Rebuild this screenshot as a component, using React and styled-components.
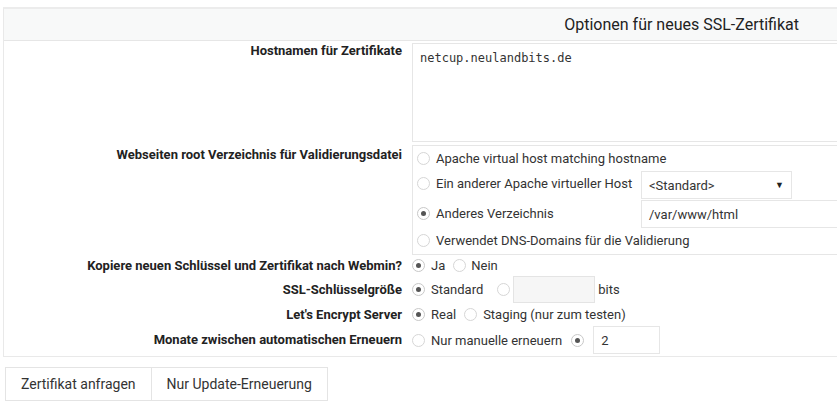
import React from 'react';
import styled, { createGlobalStyle } from 'styled-components';

const GlobalStyle = createGlobalStyle`
  html, body {
    margin: 0;
    padding: 0;
    background: #fff;
    overflow: hidden;
  }
  body {
    font-family: Roboto, "Liberation Sans", sans-serif;
    font-size: 13px;
    color: #333;
  }
`;

const Page = styled.div`
  padding: 7px 0 0 3px;
`;

const Panel = styled.div`
  width: 850px;
  border: 1px solid #e9e9e9;
  border-top: 2px solid #ececec;
  background: #fff;
`;

const PanelHeader = styled.div`
  height: 31px;
  background: #f8f9f9;
  border-bottom: 1px solid #e6e6e6;
  display: flex;
  align-items: center;
  justify-content: flex-end;
  padding-right: 55px;
  font-size: 16px;
  color: #222;
`;

const Form = styled.div`
  display: grid;
  grid-template-columns: 398px 1fr;
  column-gap: 10px;
  padding: 2px 0 2px;
`;

const Label = styled.div`
  text-align: right;
  font-weight: bold;
  color: #222;
  line-height: 16px;
  padding-top: ${(p) => p.$top || 0}px;
  align-self: ${(p) => (p.$top !== undefined ? 'start' : 'center')};
`;

const Value = styled.div`
  display: flex;
  align-items: center;
  min-height: ${(p) => p.$h || 23}px;
  margin-bottom: ${(p) => p.$mb || 0}px;
`;

const TextArea = styled.div`
  width: 100%;
  height: 99px;
  border: 1px solid #e6e6e6;
  padding: 7px 7px;
  box-sizing: border-box;
  font-family: "DejaVu Sans Mono", "Liberation Mono", monospace;
  font-size: 12px;
  color: #333;
`;

const ChoiceBox = styled.div`
  width: 100%;
  border: 1px solid #e6e6e6;
  padding: 0 0 1px 4px;
  display: grid;
  grid-template-columns: 224px 1fr;
  row-gap: 1px;
  align-items: center;
`;

const ChoiceRow = styled.div`
  grid-column: ${(p) => (p.$wide ? '1 / span 2' : 'auto')};
  display: flex;
  align-items: center;
  height: ${(p) => p.$h || 23}px;
  padding-bottom: ${(p) => p.$raise || 0}px;
  box-sizing: border-box;
`;

const Radio = styled.span`
  display: inline-block;
  box-sizing: border-box;
  width: 13px;
  height: 13px;
  border-radius: 50%;
  border: 1px solid ${(p) => (p.$checked ? '#c8c8c8' : '#d6d6d6')};
  background: #fff;
  position: relative;
  margin-right: ${(p) => p.$gap ?? 6}px;
  margin-left: ${(p) => p.$left || 0}px;
  flex-shrink: 0;
  &::after {
    content: '';
    display: ${(p) => (p.$checked ? 'block' : 'none')};
    position: absolute;
    left: 3px;
    top: 3px;
    width: 5px;
    height: 5px;
    border-radius: 50%;
    background: #555;
  }
`;

const Text = styled.span`
  color: #333;
  white-space: nowrap;
`;

const Select = styled.div`
  width: 151px;
  height: 28px;
  box-sizing: border-box;
  border: 1px solid #e6e6e6;
  display: flex;
  align-items: center;
  justify-content: space-between;
  padding: 0 7px 0 7px;
  color: #333;
`;

const Arrow = styled.span`
  font-size: 9px;
  color: #222;
`;

const Input = styled.div`
  box-sizing: border-box;
  width: ${(p) => (p.$w ? `${p.$w}px` : '100%')};
  height: ${(p) => p.$h || 28}px;
  border: 1px solid ${(p) => (p.$disabled ? '#e4e4e4' : '#e6e6e6')};
  background: ${(p) => (p.$disabled ? '#f6f6f6' : '#fff')};
  display: flex;
  align-items: center;
  padding-left: 7px;
  color: #333;
  margin-left: ${(p) => p.$left || 0}px;
  margin-right: ${(p) => p.$right || 0}px;
`;

const Buttons = styled.div`
  display: flex;
  margin: 10px 0 0 2px;
`;

const Button = styled.button`
  height: 34px;
  padding: 0 15px;
  border: 1px solid #e4e4e4;
  background: #fff;
  font-family: Roboto, "Liberation Sans", sans-serif;
  font-size: 14px;
  color: #333;
  & + & {
    border-left: none;
  }
`;

const App = () => (
  <Page>
    <GlobalStyle />
    <Panel>
      <PanelHeader>Optionen für neues SSL-Zertifikat</PanelHeader>
      <Form>
        <Label $top={0}>Hostnamen für Zertifikate</Label>
        <Value $mb={3}>
          <TextArea>netcup.neulandbits.de</TextArea>
        </Value>

        <Label $top={2}>Webseiten root Verzeichnis für Validierungsdatei</Label>
        <Value>
          <ChoiceBox>
            <ChoiceRow $wide $h={24}>
              <Radio />
              <Text>Apache virtual host matching hostname</Text>
            </ChoiceRow>
            <ChoiceRow $h={28} $raise={3}>
              <Radio />
              <Text>Ein anderer Apache virtueller Host</Text>
            </ChoiceRow>
            <Select>
              <span>&lt;Standard&gt;</span>
              <Arrow>▼</Arrow>
            </Select>
            <ChoiceRow $h={28} $raise={2}>
              <Radio $checked />
              <Text>Anderes Verzeichnis</Text>
            </ChoiceRow>
            <Input>/var/www/html</Input>
            <ChoiceRow $wide $h={24} $raise={1}>
              <Radio />
              <Text>Verwendet DNS-Domains für die Validierung</Text>
            </ChoiceRow>
          </ChoiceBox>
        </Value>

        <Label>Kopiere neuen Schlüssel und Zertifikat nach Webmin?</Label>
        <Value $h={21}>
          <Radio $checked />
          <Text>Ja</Text>
          <Radio $left={8} $gap={5} />
          <Text>Nein</Text>
        </Value>

        <Label>SSL-Schlüsselgröße</Label>
        <Value $h={27}>
          <Radio $checked />
          <Text>Standard</Text>
          <Radio $left={14} $gap={3} />
          <Input $w={82} $h={27} $disabled $right={3} />
          <Text>bits</Text>
        </Value>

        <Label>Let's Encrypt Server</Label>
        <Value>
          <Radio $checked />
          <Text>Real</Text>
          <Radio $left={8} $gap={6} />
          <Text>Staging (nur zum testen)</Text>
        </Value>

        <Label>Monate zwischen automatischen Erneuern</Label>
        <Value $h={27}>
          <Radio />
          <Text>Nur manuelle erneuern</Text>
          <Radio $checked $left={9} $gap={9} />
          <Input $w={67} $h={28}>2</Input>
        </Value>
      </Form>
    </Panel>
    <Buttons>
      <Button>Zertifikat anfragen</Button>
      <Button>Nur Update-Erneuerung</Button>
    </Buttons>
  </Page>
);

export default App;
